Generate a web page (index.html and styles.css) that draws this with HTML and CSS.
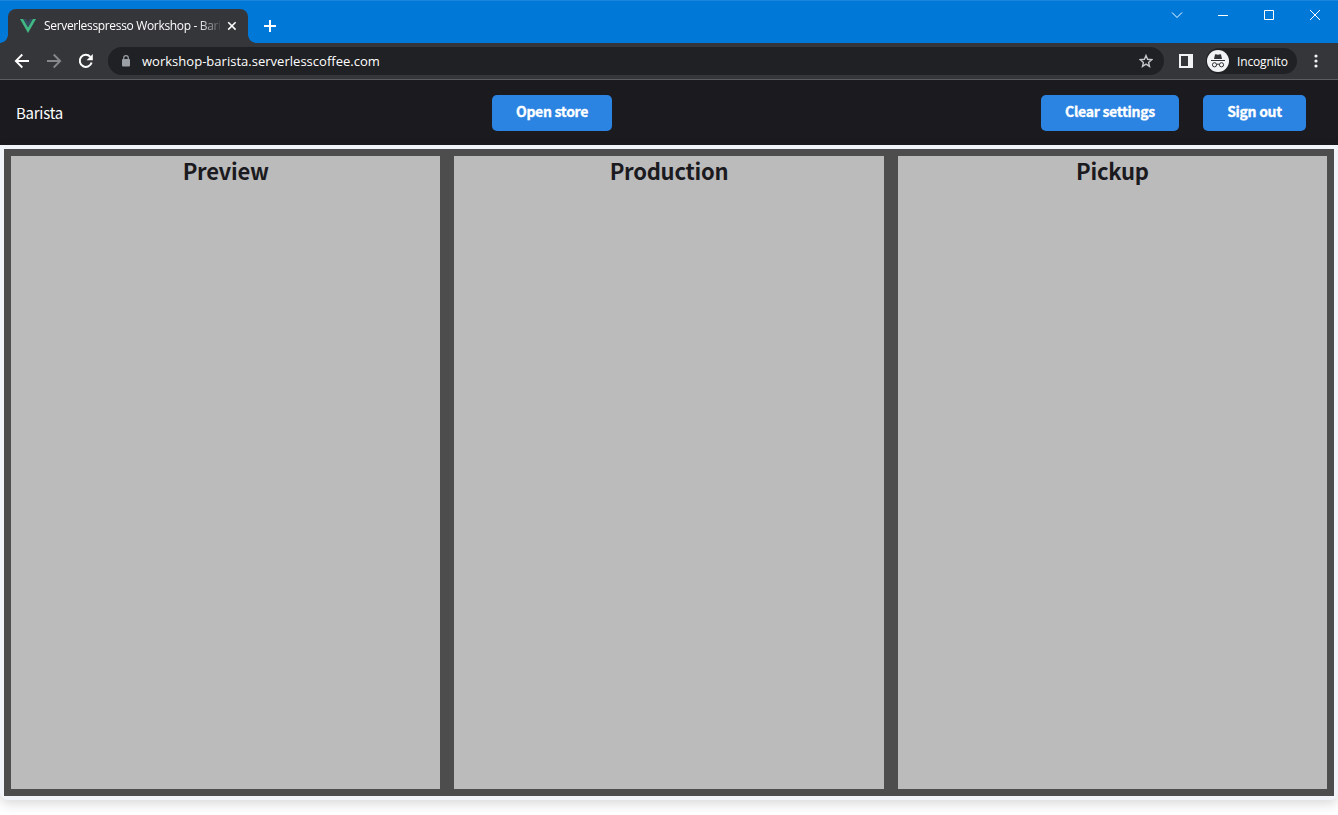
FILE: index.html
```html
<!DOCTYPE html>
<html lang="en">
<head>
<meta charset="utf-8">
<title>Serverlesspresso Workshop - Barista</title>
<link rel="stylesheet" href="styles.css">
</head>
<body>
<div class="titlebar">
  <div class="tab">
    <svg class="favicon" width="16" height="14" viewBox="0 0 16 14"><path fill="#41b883" d="M0 0h3.2L8 8.3 12.8 0H16L8 14z"/><path fill="#35495e" d="M3.2 0h3L8 3.1 9.8 0h3L8 8.3z"/></svg>
    <span class="tab-title"><span class="tab-text">Serverlesspresso Workshop - Bari</span></span>
    <svg class="tab-close" width="10" height="10" viewBox="0 0 10 10"><path d="M1.2 1.2l7.4 7.4M8.6 1.2L1.2 8.6" stroke="#fff" stroke-width="1.5"/></svg>
  </div>
  <svg class="new-tab" width="12" height="12" viewBox="0 0 12 12"><path d="M6 0v12M0 6h12" stroke="#fff" stroke-width="2"/></svg>
  <div class="window-controls">
    <svg width="46" height="30" viewBox="0 0 46 30"><path d="M18 12.5l5 5 5-5"/></svg>
    <svg width="46" height="30" viewBox="0 0 46 30"><path d="M18 15.5h10"/></svg>
    <svg width="46" height="30" viewBox="0 0 46 30"><path d="M18.5 10.5h9v9h-9z"/></svg>
    <svg width="46" height="30" viewBox="0 0 46 30"><path d="M18 10l10 10M28 10L18 20"/></svg>
  </div>
</div>
<div class="toolbar">
  <svg class="nav back" width="16" height="16" viewBox="0 0 16 16"><path d="M15 8H2M8.3 1.5L1.8 8l6.5 6.5" fill="none" stroke="#fff" stroke-width="1.8"/></svg>
  <svg class="nav forward" width="16" height="16" viewBox="0 0 16 16"><path d="M1 8h13M7.7 1.5L14.2 8l-6.500 6.500" fill="none" stroke="#87888b" stroke-width="1.8"/></svg>
  <svg class="nav reload" width="16" height="16" viewBox="0 0 16 16"><path d="M13.6 9.4A6 6 0 1 1 12.3 3.9" fill="none" stroke="#fff" stroke-width="2"/><path d="M14.8 1v6.2H8.600z" fill="#fff"/></svg>
  <div class="omnibox">
    <svg class="lock" width="10" height="12" viewBox="0 0 10 12"><rect x="1" y="4" width="8" height="7.500" rx="1" fill="#9aa0a6"/><path d="M2.700 5V3a2.300 2.300 0 0 1 4.600 0v2" fill="none" stroke="#9aa0a6" stroke-width="1.200"/></svg>
    <span class="url">workshop-barista.serverlesscoffee.com</span>
    <svg class="star" width="14" height="14" viewBox="0 0 14 14"><path d="M7 1.500l1.600 3.800 4.100.4-3.100 2.700.9 4L7 10.200l-3.500 2.200.9-4-3.100-2.700 4.100-.4z" fill="none" stroke="#c5c7ca" stroke-width="1.400"/></svg>
  </div>
  <svg class="panel" width="14" height="14" viewBox="0 0 14 14"><path fill="#f1f3f4" fill-rule="evenodd" d="M0 0h14v14H0zM2 2v10h7V2z"/></svg>
  <div class="incognito">
    <svg width="22" height="22" viewBox="0 0 22 22"><circle cx="11" cy="11" r="11" fill="#f1f3f4"/><path fill="#303134" d="M4 10h14v1H4zM7 9l1-4.500q.2-.5.8-.3l2.200.5 2.200-.5q.6-.2.8.3L15 9z"/><path d="M9.700 14.400q1.300-.7 2.600 0" fill="none" stroke="#303134"/><circle cx="7.500" cy="14.800" r="2.100" fill="none" stroke="#303134"/><circle cx="14.500" cy="14.800" r="2.100" fill="none" stroke="#303134"/></svg>
    <span class="incognito-text">Incognito</span>
  </div>
  <svg class="menu" width="4" height="14" viewBox="0 0 4 14" fill="#f1f3f4"><circle cx="2" cy="2" r="1.600"/><circle cx="2" cy="7" r="1.600"/><circle cx="2" cy="12" r="1.600"/></svg>
</div>
<header class="app-header">
  <span class="brand">Barista</span>
  <button class="button open">Open store</button>
  <div class="actions">
    <button class="button clear">Clear settings</button>
    <button class="button signout">Sign out</button>
  </div>
</header>
<main class="page">
  <div class="board">
    <section class="column"><h2>Preview</h2></section>
    <section class="column"><h2>Production</h2></section>
    <section class="column"><h2>Pickup</h2></section>
  </div>
</main>
</body>
</html>
```
FILE: styles.css
```css
* { box-sizing: border-box; }
body { margin: 0; height: 815px; overflow: hidden; background: #fff; font-family: "Noto Sans CJK SC", sans-serif; }
svg { display: block; flex: none; }

.titlebar { display: flex; height: 43px; background: #0078d7; border-top: 1px solid #1a85db; padding-left: 8px; }
.tab { position: relative; display: flex; align-items: center; width: 240px; height: 34px; margin-top: 8px; padding-left: 12px; background: #35363a; border-radius: 8px 8px 0 0; }
.tab::before, .tab::after { content: ""; position: absolute; bottom: 0; width: 8px; height: 8px; }
.tab::before { left: -8px; background: radial-gradient(circle at 0 0, transparent 7.5px, #35363a 8px); }
.tab::after { right: -8px; background: radial-gradient(circle at 100% 0, transparent 7.5px, #35363a 8px); }
.tab-title { width: 176px; margin-left: 8px; white-space: nowrap; color: #fff; font: 12px/20px "Open Sans", sans-serif; -webkit-mask-image: linear-gradient(to right, #000 154px, transparent 179px); mask-image: linear-gradient(to right, #000 154px, transparent 179px); }
.tab-text { letter-spacing: -0.33px; }
.tab-close { margin-left: 7px; }
.new-tab { margin: 19px 0 0 16px; }
.window-controls { display: flex; margin: -1px 0 0 auto; fill: none; stroke: #fff; stroke-width: 1; }

.toolbar { display: flex; align-items: center; height: 37px; background: #35363a; border-bottom: 1px solid #5b5c5f; padding-left: 14px; color: #fff; font-family: "Open Sans", sans-serif; }
.forward, .reload { margin-left: 16px; }
.omnibox { display: flex; align-items: center; width: 1056px; height: 28px; margin-left: 14px; padding: 0 11px 0 13px; border-radius: 14px; background: #202124; }
.url { margin-left: 11px; font-size: 13px; line-height: 20px; letter-spacing: 0.02px; white-space: nowrap; }
.star { margin-left: auto; }
.panel { margin-left: 15px; }
.incognito { display: flex; align-items: center; width: 91px; height: 26px; margin-left: 13px; padding-left: 1px; border-radius: 13px; background: #202124; }
.incognito-text { margin-left: 8px; padding-top: 1px; font-size: 12px; line-height: 20px; letter-spacing: -0.15px; }
.menu { margin-left: 17px; }

.app-header { display: flex; align-items: center; height: 65px; padding: 0 32px 0 16px; background: #1b1a1f; color: #fff; }
.brand { width: 476px; font-size: 15px; line-height: 24px; letter-spacing: -0.25px; padding-top: 1px; }
.button { height: 36px; padding: 0 0 3px; border: 0; border-radius: 5px; background: #2b83e2; color: #fff; font: bold 14px/20px "Noto Sans CJK SC", sans-serif; letter-spacing: -0.3px; -webkit-text-stroke: 0.3px #fff; text-align: center; white-space: nowrap; }
.open { width: 120px; }
.actions { display: flex; gap: 24px; margin-left: auto; }
.clear { width: 138px; }
.signout { width: 103px; }

.page { height: 655px; padding: 4px; background: #f1f5fa; border-radius: 0 0 8px 8px; box-shadow: 0 4px 12px rgba(0, 0, 0, 0.15); }
.board { display: grid; grid-template-columns: repeat(3, 1fr); gap: 14px; height: 647px; padding: 7px; background: #4d4d4d; }
.column { background: #bbb; text-align: center; }
h2 { margin: 0; color: #1b1a1f; font-size: 22px; line-height: 29px; letter-spacing: -0.25px; font-weight: 700; }
```
